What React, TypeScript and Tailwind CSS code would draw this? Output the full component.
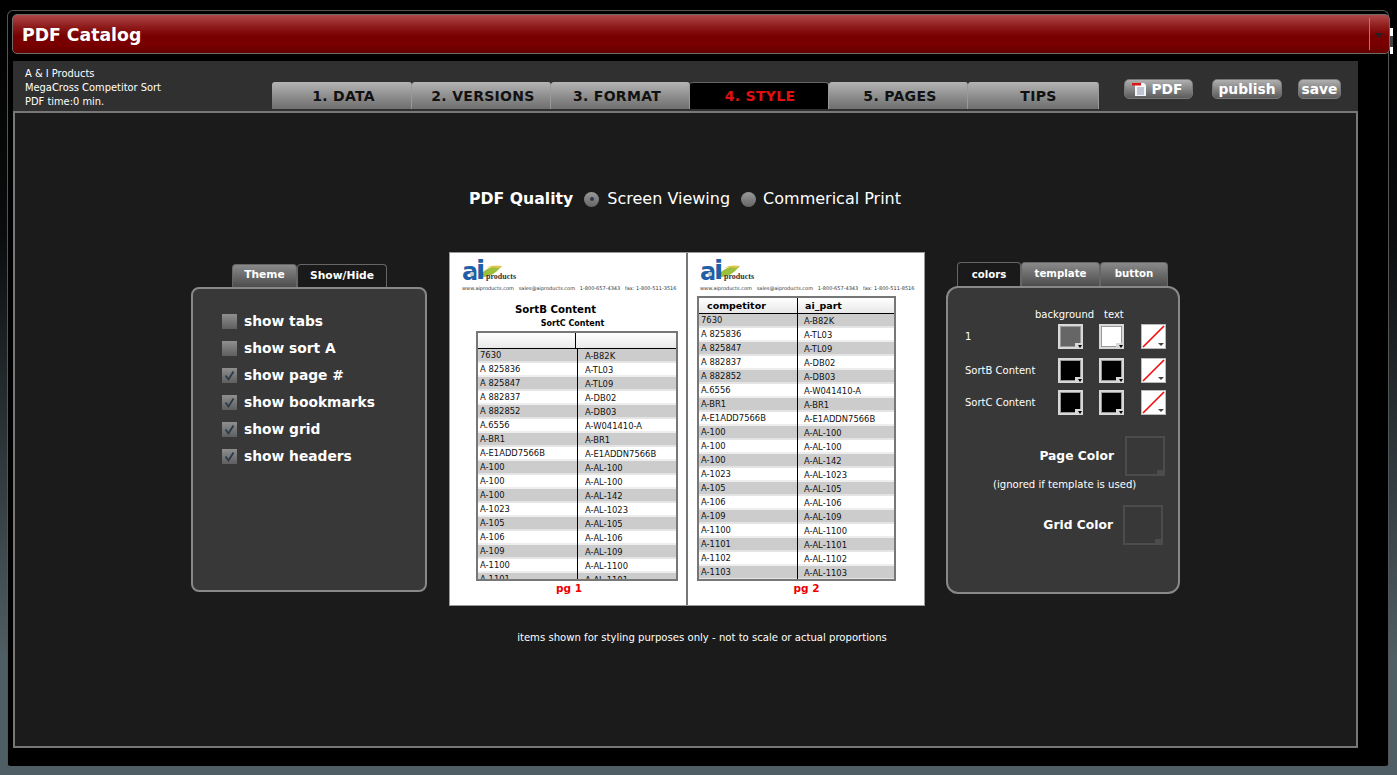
const FONT = "font-['DejaVu_Sans',sans-serif]";

const steps = [
  { label: "1. DATA", w: "w-[140px]", pad: "pl-[4px]" },
  { label: "2. VERSIONS", w: "w-[139px]", pad: "pl-[4px]" },
  { label: "3. FORMAT", w: "w-[139px]", pad: "pr-[6px]" },
  { label: "4. STYLE", w: "w-[139px]", pad: "pl-[2px]", active: true },
  { label: "5. PAGES", w: "w-[139px]", pad: "pl-[4px]" },
  { label: "TIPS", w: "w-[131px]", pad: "pl-[11px]" },
];

const left1 = ["7630","A 825836","A 825847","A 882837","A 882852","A.6556","A-BR1","A-E1ADD7566B","A-100","A-100","A-100","A-1023","A-105","A-106","A-109","A-1100","A-1101"];
const right1 = ["A-B82K","A-TL03","A-TL09","A-DB02","A-DB03","A-W041410-A","A-BR1","A-E1ADDN7566B","A-AL-100","A-AL-100","A-AL-142","A-AL-1023","A-AL-105","A-AL-106","A-AL-109","A-AL-1100","A-AL-1101"];
const left2 = [...left1, "A-1102", "A-1103"];
const right2 = [...right1, "A-AL-1102", "A-AL-1103"];

function Logo({ contact }: { contact: string }) {
  return (
    <div className="h-[34px] w-full shrink-0">
      <div className="flex items-end h-[24px] pl-[12px]">
        <svg width="54" height="24" viewBox="0 0 54 24" className="shrink-0 overflow-visible">
          <path d="M20 15 C26 9 32 8 40 8 L36 12 C32 16 27 19 21 19 Z" fill="#9cbf3c" />
          <path d="M24 10 C29 7 35 7 40 8 L36 10 C32 9 28 9 24 10 Z" fill="#e3c64a" />
          <text x="0" y="22" fontSize="24" fontWeight="700" fontFamily="DejaVu Sans, sans-serif" fill="#1d5fa8">a</text>
          <text x="14" y="21" fontSize="27" fontWeight="700" fontFamily="DejaVu Sans, sans-serif" fill="#1d5fa8">i</text>
          <circle cx="10" cy="16" r="2.2" fill="#c9c9c9" />
        </svg>
        <span className="text-[8px] leading-none text-[#333] font-['Liberation_Serif',serif] font-bold -ml-[30px] mb-[1px]">products</span>
      </div>
      <div className="pl-[12px] mt-[2px] text-[5px] leading-[8px] text-[#333] whitespace-pre">{contact}</div>
    </div>
  );
}

function DataTable({ a, b, head, bodyCol, headCol, divider, pad }: { a: string[]; b: string[]; head?: [string, string]; bodyCol: string; headCol: string; divider: string; pad: string }) {
  return (
    <div className="border-2 border-[#777] overflow-hidden flex flex-col h-full">
      <div className="flex h-[16px] shrink-0 border-b border-black bg-gradient-to-b from-white to-[#e8e8e8] text-[9.5px] leading-[15px] font-bold text-black">
        <div className={`${headCol} border-r border-black pl-[8px] shrink-0`}>{head?.[0]}</div>
        <div className="flex-1 pl-[7px]">{head?.[1]}</div>
      </div>
      <div className="relative flex-1 overflow-hidden">
        {a.map((v, i) => (
          <div key={i} className={`flex h-[14px] text-[8.4px] leading-[12px] text-[#111] border-b-2 ${i % 2 === 0 ? "bg-[#cccccc] border-[#e4e4e4]" : "bg-white border-[#eeeeee]"}`}>
            <div className={`${bodyCol} pl-[2px] shrink-0`}>{v}</div>
            <div className={`${pad} flex-1 pt-[1px]`}>{b[i]}</div>
          </div>
        ))}
        <span className={`absolute top-0 bottom-0 w-[1px] bg-black ${divider}`} />
      </div>
    </div>
  );
}

function Swatch({ kind }: { kind: "grey" | "white" | "black" | "none" }) {
  if (kind === "none") {
    return (
      <div className="relative w-[25px] h-[25px] bg-white border border-[#bbb]">
        <svg width="23" height="23" viewBox="0 0 23 23" className="block">
          <line x1="1" y1="22" x2="22" y2="1" stroke="#ee1111" strokeWidth="1.7" />
        </svg>
        <span className="absolute right-[1px] bottom-[2px] w-0 h-0 border-x-[3px] border-x-transparent border-t-[3px] border-t-[#444]" />
      </div>
    );
  }
  const bg = kind === "grey" ? "bg-[#666666]" : kind === "white" ? "bg-white" : "bg-black";
  return (
    <div className={`relative w-[25px] h-[25px] border-2 border-[#d8d8d8] outline outline-1 -outline-offset-[3px] outline-[#999] ${bg}`}>
      <span className="absolute right-[-2px] bottom-[-2px] w-[8px] h-[6px] bg-[#d8d8d8]" />
      <span className="absolute right-[-1px] bottom-[-1px] w-0 h-0 border-x-[2.5px] border-x-transparent border-t-[3px] border-t-black" />
    </div>
  );
}

function Check({ on }: { on: boolean }) {
  return (
    <div className="w-[15px] h-[15px] shrink-0 bg-gradient-to-b from-[#8f8f8f] to-[#5f5f5f] flex items-center justify-center">
      {on && (
        <svg width="13" height="13" viewBox="0 0 13 13">
          <path d="M2.5 6.5 L5.5 10.5 L10.5 2.5" fill="none" stroke="#2b3a4a" strokeWidth="1.8" />
        </svg>
      )}
    </div>
  );
}

function Radio({ on }: { on: boolean }) {
  return (
    <span className="w-[15px] h-[15px] rounded-full bg-gradient-to-b from-[#999] to-[#666] flex items-center justify-center shrink-0">
      {on && <span className="w-[4px] h-[4px] rounded-full bg-[#2b3a4a]" />}
    </span>
  );
}

const greyTab = "bg-gradient-to-b from-[#8a8a8a] to-[#4d4d4d] text-white border-t border-x border-[#666] rounded-t-[4px]";
const darkTab = "bg-[#1a1a1a] text-white border-t border-x border-[#666] rounded-t-[4px]";

function TopButton({ children, w, ml }: { children: React.ReactNode; w: string; ml: string }) {
  return (
    <div className={`${w} ${ml} h-[20px] rounded-[5px] border border-[#777] bg-gradient-to-b from-[#b0b0b0] to-[#5c5c5c] flex items-center justify-center pt-[1px] text-white font-bold text-[13.8px] leading-none`}>
      {children}
    </div>
  );
}

export default function App() {
  const checks: [string, boolean][] = [
    ["show tabs", false],
    ["show sort A", false],
    ["show page #", true],
    ["show bookmarks", true],
    ["show grid", true],
    ["show headers", true],
  ];
  return (
    <div className={`${FONT} w-[1397px] h-[775px] overflow-hidden bg-[linear-gradient(#000000_0%,#0a0c0d_30%,#4f5e64_85%)] pl-[7px]`}>
      <div className="relative w-[1382px] h-[766px] bg-black pt-[10px] rounded-b-[4px]">
        <div className="w-[1382px] h-[756px] border-t border-x border-[#555] rounded-t-[6px] pt-[3px] pl-[4px]">
          {/* title bar */}
          <div className="relative w-[1378px] h-[40px] rounded-[5px] border border-[#6b6b6b] bg-[linear-gradient(#b04848_0%,#8f1c1c_30%,#780000_55%,#780000_80%,#660000_100%)] flex items-center pl-[9px]">
            <span className="text-white font-bold text-[17.3px] leading-none pt-[4px]">PDF Catalog</span>
            <span className="absolute right-[19px] top-[3px] bottom-[3px] w-[1px] bg-[#c07070]" />
            <span className="absolute right-[6px] top-[18px] w-0 h-0 border-x-[4px] border-x-transparent border-t-[5px] border-t-[#222]" />
            <span className="absolute right-[-4px] top-[13px] w-[3px] h-[8px] bg-white" />
            <span className="absolute right-[-4px] top-[21px] w-[3px] h-[11px] bg-[#444]" />
            <span className="absolute right-[-4px] top-[32px] w-[3px] h-[7px] bg-white" />
          </div>
          {/* header strip */}
          <div className="w-[1345px] ml-[1px] mt-[7px] h-[50px] bg-[#303030] flex items-start">
            <div className="w-[259px] shrink-0 pl-[12px] pt-[6px] text-white text-[9.9px] leading-[14px]">
              <div>A &amp; I Products</div>
              <div>MegaCross Competitor Sort</div>
              <div>PDF time:0 min.</div>
            </div>
            <div className="flex mt-[21px] h-[27px]">
              {steps.map((s) => (
                <div
                  key={s.label}
                  className={`${s.w} ${s.pad} h-[27px] rounded-t-[3px] border-r border-[#999] flex items-end justify-center pb-[6px] font-bold text-[14px] leading-none tracking-[0.3px] ${
                    s.active
                      ? "bg-black text-[#e01010] border-t border-t-[#666]"
                      : "bg-gradient-to-b from-[#b4b4b4] to-[#6e6e6e] text-[#111]"
                  }`}
                >
                  {s.label}
                </div>
              ))}
            </div>
            <div className="flex mt-[18px]">
              <TopButton w="w-[69px]" ml="ml-[25px]">
                <svg width="15" height="15" viewBox="0 0 15 15" className="mr-[5px] -ml-[3px]">
                  <path d="M3 1 H12 L14 3 V14 H3 Z" fill="#f4f6fa" />
                  <rect x="0" y="1" width="9" height="2.5" fill="#e01515" />
                  <path d="M5 6 H12 M5 8 H12 M5 10 H12 M5 12 H12" stroke="#8b97ad" strokeWidth="1" />
                </svg>
                PDF
              </TopButton>
              <TopButton w="w-[70px]" ml="ml-[19px]">publish</TopButton>
              <TopButton w="w-[43px]" ml="ml-[16px]">save</TopButton>
            </div>
          </div>
          {/* main */}
          <div className="w-[1345px] ml-[1px] h-[637px] border-2 border-[#777] bg-[#1b1b1b] flex flex-col">
            <div className="flex items-center h-[24px] mt-[74px] pl-[454px] text-white text-[16px] leading-none">
              <span className="font-bold text-[15.7px] mr-[11px]">PDF Quality</span>
              <Radio on />
              <span className="ml-[8px] mr-[11px]">Screen Viewing</span>
              <Radio on={false} />
              <span className="ml-[7px]">Commerical Print</span>
            </div>
            <div className="flex items-start mt-[41px] pl-[176px]">
              {/* left panel */}
              <div className="w-[236px] mt-[12px] shrink-0">
                <div className="flex h-[23px] pl-[41px] text-[10.7px] font-bold leading-none">
                  <div className={`${greyTab} w-[65px] flex items-center justify-center pb-[2px]`}>Theme</div>
                  <div className={`${darkTab} w-[90px] flex items-center justify-center`}>Show/Hide</div>
                </div>
                <div className="h-[305px] rounded-[8px] border-2 border-[#888] bg-[#383838] pl-[29px] pt-[19px]">
                  {checks.map(([t, on]) => (
                    <div key={t} className="flex items-center h-[27px] gap-[7px] text-white font-bold text-[13.8px] leading-none">
                      <Check on={on} />
                      <span>{t}</span>
                    </div>
                  ))}
                </div>
              </div>
              {/* pages */}
              <div className="ml-[22px] w-[476px] h-[354px] flex shrink-0 bg-white border border-[#999]">
                <div className="w-[238px] h-full border-r-2 border-[#777] pt-[5px] flex flex-col shrink-0">
                  <Logo contact="www.aiproducts.com   sales@aiproducts.com   1-800-657-4343   fax: 1-800-511-3516" />
                  <div className="text-center text-[10.2px] font-bold text-black leading-none mt-[13px] -ml-[25px]">SortB Content</div>
                  <div className="text-center text-[8px] font-bold text-black leading-none mt-[5px] pl-[9px]">SortC Content</div>
                  <div className="ml-[26px] w-[202px] h-[250px] mt-[3px] shrink-0">
                    <DataTable a={left1} b={right1} headCol="w-[98px]" bodyCol="w-[99px]" divider="left-[99px]" pad="pl-[8px]" />
                  </div>
                  <div className="text-center text-[#ee0000] font-bold text-[10.5px] leading-none mt-[2px] pl-[2px]">pg 1</div>
                </div>
                <div className="flex-1 pt-[5px] flex flex-col">
                  <Logo contact="www.aiproducts.com   sales@aiproducts.com   1-800-657-4343   fax: 1-800-511-8516" />
                  <div className="ml-[9px] w-[199px] h-[285px] mt-[4px] shrink-0">
                    <DataTable a={left2} b={right2} head={["competitor", "ai_part"]} headCol="w-[99px]" bodyCol="w-[98px]" divider="left-[98px]" pad="pl-[7px]" />
                  </div>
                  <div className="text-center text-[#ee0000] font-bold text-[10.5px] leading-none mt-[2px] pl-[1px]">pg 2</div>
                </div>
              </div>
              {/* right panel */}
              <div className="ml-[21px] w-[234px] mt-[10px] shrink-0">
                <div className="flex h-[24px] pl-[11px] text-[10.2px] font-bold leading-none">
                  <div className={`${darkTab} w-[64px] flex items-center justify-center pt-[2px]`}>colors</div>
                  <div className={`${greyTab} w-[79px] flex items-center justify-center`}>template</div>
                  <div className={`${greyTab} w-[68px] flex items-center justify-center`}>button</div>
                </div>
                <div className="h-[308px] rounded-[12px] border-2 border-[#888] bg-[#383838] text-white text-[10px] leading-none pt-[21px]">
                  <div className="flex h-[12px] pl-[87px] items-center">
                    <span className="w-[69px]">background</span>
                    <span>text</span>
                  </div>
                  <div className="flex items-center h-[25px] mt-[3px] pl-[17px]">
                    <span className="w-[93px]">1</span>
                    <Swatch kind="grey" />
                    <span className="w-[16px]" />
                    <Swatch kind="white" />
                    <span className="w-[17px]" />
                    <Swatch kind="none" />
                  </div>
                  <div className="flex items-center h-[25px] mt-[9px] pl-[17px]">
                    <span className="w-[93px]">SortB Content</span>
                    <Swatch kind="black" />
                    <span className="w-[16px]" />
                    <Swatch kind="black" />
                    <span className="w-[17px]" />
                    <Swatch kind="none" />
                  </div>
                  <div className="flex items-center h-[25px] mt-[7px] pl-[17px]">
                    <span className="w-[93px]">SortC Content</span>
                    <Swatch kind="black" />
                    <span className="w-[16px]" />
                    <Swatch kind="black" />
                    <span className="w-[17px]" />
                    <Swatch kind="none" />
                  </div>
                  <div className="flex items-center justify-end h-[40px] mt-[21px] pr-[13px]">
                    <span className="font-bold text-[12.3px] mr-[11px]">Page Color</span>
                    <div className="relative w-[40px] h-[40px] border-2 border-[#4c4c4c]"><span className="absolute right-0 bottom-0 w-[6px] h-[4px] bg-[#4c4c4c]" /></div>
                  </div>
                  <div className="text-[10.1px] mt-[4px] pl-[45px]">(ignored if template is used)</div>
                  <div className="flex items-center justify-end h-[40px] mt-[15px] pr-[15px]">
                    <span className="font-bold text-[12.3px] mr-[10px]">Grid Color</span>
                    <div className="relative w-[40px] h-[40px] border-2 border-[#4c4c4c]"><span className="absolute right-0 bottom-0 w-[6px] h-[4px] bg-[#4c4c4c]" /></div>
                  </div>
                </div>
              </div>
            </div>
            <div className="text-center text-white text-[10.1px] leading-none mt-[27px] pl-[33px]">items shown for styling purposes only - not to scale or actual proportions</div>
          </div>
        </div>
      </div>
    </div>
  );
}
